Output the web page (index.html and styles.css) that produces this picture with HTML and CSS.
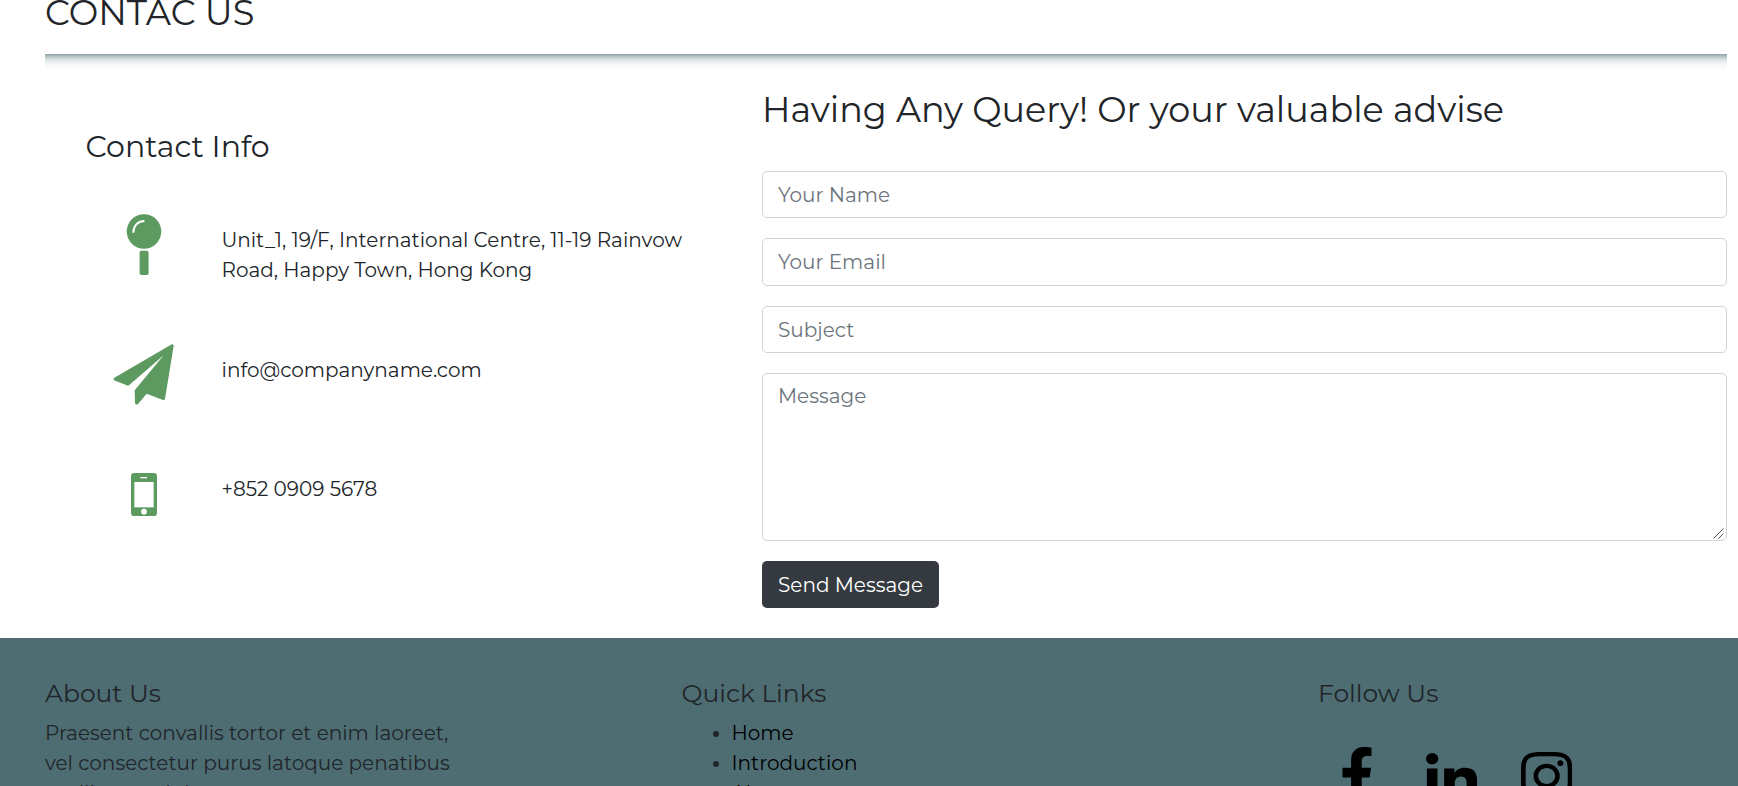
FILE: index.html
```html
<!DOCTYPE html>
<html lang="en">
<head>
<meta charset="utf-8">
<title>Contact Us</title>
<link rel="stylesheet" href="styles.css">
</head>
<body>
<main class="contact">
  <h1 class="title">CONTAC US</h1>
  <div class="rule"></div>
  <div class="columns">
    <section class="info">
      <h3 class="info-title">Contact Info</h3>
      <div class="info-row">
        <div class="icon">
          <svg width="36" height="62" viewBox="0 0 36 62"><circle cx="18" cy="17.5" r="17.3" fill="#5d9a60"/><rect x="13.6" y="36.8" width="9" height="24.2" rx="1.8" fill="#5d9a60"/><path d="M7.3 18.7C7.3 11.8 11.8 7.2 18.4 7" fill="none" stroke="#fff" stroke-width="2"/></svg>
        </div>
        <p class="info-text">Unit_1, 19/F, International Centre, 11-19 Rainvow<br>Road, Happy Town, Hong Kong</p>
      </div>
      <div class="info-row">
        <div class="icon">
          <svg width="61" height="61" viewBox="100 462 183 183"><path fill="#5d9a60" d="M282 467 256 627Q254 631 250 630L201 611 175 642Q170 646 166 640L165 601 252 496 148 586Q145 588 141 586L103 571Q99 567 104 563L274 464Q281 461 282 467Z"/></svg>
        </div>
        <p class="info-text">info@companyname.com</p>
      </div>
      <div class="info-row phone-row">
        <div class="icon">
          <svg width="26" height="43" viewBox="153 849 78 129"><rect x="153" y="849" width="78" height="129" rx="10" fill="#5d9a60"/><rect x="163" y="876" width="58" height="76" fill="#fff"/><circle cx="192" cy="965" r="8.5" fill="#fff"/><rect x="181" y="861" width="20" height="4" fill="#fff"/></svg>
        </div>
        <p class="info-text">+852 0909 5678</p>
      </div>
    </section>
    <section class="query">
      <h2 class="query-title">Having Any Query! Or your valuable advise</h2>
      <form class="form">
        <input class="field" type="text" placeholder="Your Name">
        <input class="field" type="text" placeholder="Your Email">
        <input class="field" type="text" placeholder="Subject">
        <div class="message">
          <textarea class="field" placeholder="Message"></textarea>
          <svg class="grip" width="11" height="11" viewBox="0 0 11 11"><path d="M.5 10.500 10.500.5M5.500 10.500 10.500 5.500" stroke="#555" stroke-width="1"/></svg>
        </div>
        <button class="send" type="button">Send Message</button>
      </form>
    </section>
  </div>
</main>
<footer class="footer">
  <section>
    <h5 class="foot-title">About Us</h5>
    <p class="foot-text">Praesent convallis tortor et enim laoreet,<br>vel consectetur purus latoque penatibus<br>mollis eros dui</p>
  </section>
  <section>
    <h5 class="foot-title">Quick Links</h5>
    <ul class="links">
      <li><a>Home</a></li>
      <li><a>Introduction</a></li>
      <li><a>About</a></li>
    </ul>
  </section>
  <section>
    <h5 class="foot-title">Follow Us</h5>
    <div class="social">
      <svg class="fb" viewBox="0 0 320 512"><path d="M279.14 288l14.22-92.66h-88.91v-60.13c0-25.35 12.42-50.06 52.24-50.06h40.42V6.26S260.43 0 225.36 0c-73.22 0-121.08 44.38-121.08 124.72v70.62H22.89V288h81.39v224h100.17V288z"/></svg>
      <svg class="in" viewBox="0 0 448 448" preserveAspectRatio="none"><path d="M100.28 448H7.4V148.9h92.88zM53.79 108.1C24.09 108.1 0 83.5 0 53.8a53.79 53.79 0 0 1 107.58 0c0 29.7-24.1 54.3-53.79 54.3zM447.9 448h-92.68V302.4c0-34.7-.7-79.2-48.29-79.2-48.29 0-55.69 37.7-55.69 76.7V448h-92.78V148.9h89.08v40.8h1.3c12.4-23.5 42.69-48.3 87.88-48.3 94 0 111.28 61.9 111.28 142.3V448z"/></svg>
      <svg class="ig" viewBox="0 32 448 448" preserveAspectRatio="none"><path d="M224.1 141c-63.6 0-114.9 51.3-114.9 114.9s51.3 114.9 114.9 114.9S339 319.5 339 255.9 287.7 141 224.1 141zm0 189.6c-41.1 0-74.7-33.5-74.7-74.7s33.5-74.7 74.7-74.7 74.7 33.5 74.7 74.7-33.6 74.7-74.7 74.7zm146.4-194.3c0 14.9-12 26.8-26.8 26.8-14.9 0-26.8-12-26.8-26.8s12-26.8 26.8-26.8 26.8 12 26.8 26.8zm76.1 27.2c-1.7-35.9-9.9-67.7-36.2-93.9-26.2-26.2-58-34.4-93.9-36.2-37-2.1-147.9-2.1-184.9 0-35.8 1.7-67.6 9.9-93.9 36.1s-34.4 58-36.2 93.9c-2.1 37-2.1 147.9 0 184.9 1.7 35.9 9.9 67.7 36.2 93.9s58 34.4 93.9 36.2c37 2.1 147.9 2.1 184.9 0 35.9-1.7 67.7-9.9 93.9-36.2 26.2-26.2 34.4-58 36.2-93.9 2.1-37 2.1-147.8 0-184.8zM398.8 388c-7.8 19.6-22.9 34.7-42.6 42.6-29.5 11.7-99.5 9-132.1 9s-102.7 2.6-132.1-9c-19.6-7.8-34.7-22.9-42.6-42.6-11.7-29.5-9-99.5-9-132.1s-2.6-102.7 9-132.1c7.8-19.6 22.9-34.7 42.6-42.6 29.5-11.7 99.5-9 132.1-9s102.7-2.6 132.1 9c19.6 7.8 34.7 22.9 42.6 42.6 11.7 29.5 9 99.5 9 132.1s2.7 102.7-9 132.1z"/></svg>
    </div>
  </section>
</footer>
</body>
</html>
```
FILE: styles.css
```css
* { box-sizing: border-box; }
html, body { margin: 0; height: 786px; overflow: hidden; }
body {
  background: #fff;
  color: #212529;
  font: 400 20px/30px Montserrat, Inter, "Open Sans", sans-serif;
}
h1, h2, h3, h5, p, ul { margin: 0; padding: 0; font-weight: 400; }
svg { display: block; }

.contact { height: 638px; padding: 0 11px 0 45px; overflow: hidden; }
.title { margin-top: -8px; font-size: 35.2px; line-height: 42px; }
.rule {
  height: 16px;
  margin-top: 20px;
  background: linear-gradient(#8fa4a8 0, #a9babd 2px, #c9d5d6 4px, #e3eaea 7px, #f6f8f8 11px, #fff 16px);
}
.columns { display: grid; grid-template-columns: 717px 1fr; }

.info { padding: 59px 0 0 40.5px; }
.info-title { font-size: 30px; line-height: 36px; margin-bottom: 49px; }
.info-row { display: grid; grid-template-columns: 118.5px 1fr; padding-left: 17.5px; height: 130px; }
.icon { display: flex; justify-content: center; width: 81px; }
.info-text { padding-top: 11px; }
.phone-row { margin-top: -1px; }
.phone-row .info-text { padding-top: 1px; }

.query { padding-top: 19px; }
.query-title { font-size: 35px; line-height: 42px; }
.form { display: grid; grid-template-rows: 47px 48px 47px 168px 47px; gap: 20px; margin-top: 40px; }
.field {
  width: 100%;
  height: 100%;
  margin: 0;
  padding: 7px 15px;
  border: 1px solid #ced4da;
  border-radius: 5px;
  background: #fff;
  font: inherit;
  outline: none;
  resize: none;
}
.field::placeholder { color: #6c757d; opacity: 1; }
.message { position: relative; }
.message .field { display: block; }
.grip { position: absolute; right: 3px; bottom: 2px; }
.send {
  justify-self: start;
  width: 177px;
  padding: 0;
  border: 0;
  border-radius: 5px;
  background: #343a40;
  color: #fff;
  font: inherit;
}

.footer {
  display: grid;
  grid-template-columns: 636.5px 636.5px 1fr;
  height: 148px;
  padding: 40px 0 0 45px;
  background: #4d6d73;
  overflow: hidden;
}
.foot-title { font-size: 25px; line-height: 30px; margin-bottom: 10px; }
.links { padding-left: 50px; }
.links a { color: #000; }
.social { display: flex; align-items: flex-start; padding: 29px 0 0 22px; }
.fb { width: 34px; height: 54.2px; flex: none; }
.in { width: 51.3px; height: 47px; margin: 5.5px 0 0 52px; flex: none; }
.ig { width: 51.3px; height: 48px; margin: 5px 0 0 43.7px; flex: none; }
```
